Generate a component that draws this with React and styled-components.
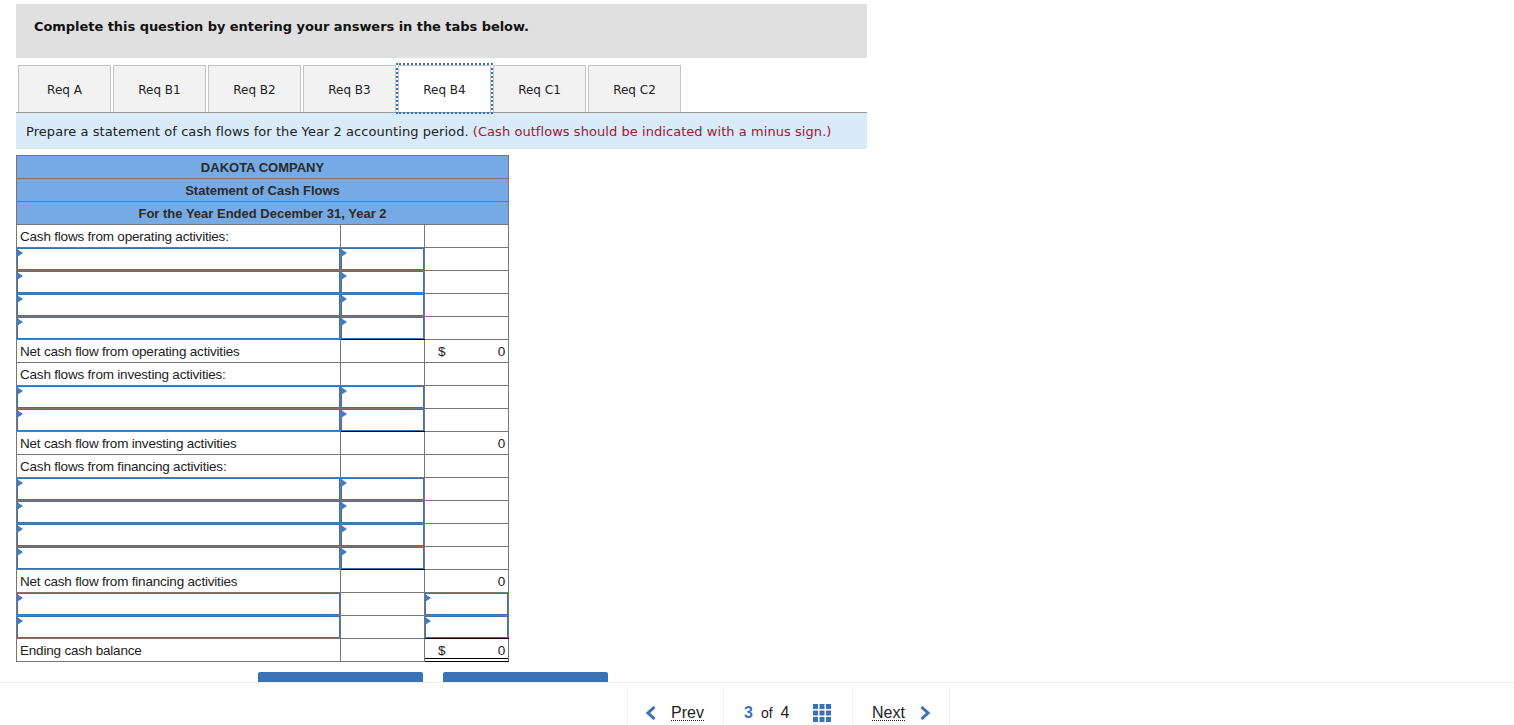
import React from "react";
import styled, { createGlobalStyle } from "styled-components";

const Global = createGlobalStyle`
  html, body { margin: 0; padding: 0; background: #fff; overflow: hidden; height: 100%; }
`;

const Page = styled.div`
  width: 1514px;
  height: 725px;
  padding: 4px 0 0 16px;
  box-sizing: border-box;
  font-family: "DejaVu Sans", Verdana, sans-serif;
  overflow: hidden;
`;

const Column = styled.div`
  width: 851px;
`;

const Banner = styled.div`
  height: 54px;
  background: #e0e0e0;
  padding-left: 18px;
  box-sizing: border-box;
  display: flex;
  align-items: center;
  font-size: 13px;
  letter-spacing: -0.05px;
  font-weight: 700;
  color: #111;
  padding-bottom: 10px;
`;

const TabRow = styled.div`
  display: flex;
  gap: 2px;
  height: 55px;
  padding: 7px 0 0 2px;
  box-sizing: border-box;
  border-bottom: 1px solid #999;
`;

const Tab = styled.div`
  width: 93px;
  height: 47px;
  box-sizing: border-box;
  display: flex;
  align-items: center;
  justify-content: center;
  padding-top: 2px;
  font-size: 12px;
  color: #222;
  background: ${(p) => (p.$active ? "#fff" : "#f2f2f2")};
  border: 1px solid #c4c4c4;
  border-bottom: none;
  ${(p) => p.$active && `outline: 2px dotted #3a73b5; position: relative; z-index: 1;`}
`;

const Instruction = styled.div`
  height: 36px;
  background: #d9ebf9;
  padding-left: 10px;
  display: flex;
  align-items: center;
  font-size: 13px;
  letter-spacing: 0.055px;
  color: #222;
  white-space: pre;
`;

const Note = styled.span`
  color: #a3172f;
`;

const Sheet = styled.table`
  margin-top: 6px;
  border-collapse: collapse;
  table-layout: fixed;
  width: 493px;
  font-family: "Liberation Sans", Arial, sans-serif;
  font-size: 13.5px;
  letter-spacing: -0.2px;
  color: #222;
`;

const NarrowCol = styled.col`
  width: 84px;
`;

const WideCol = styled.col`
  width: 324px;
`;

const Row = styled.tr`
  height: 23px;
`;

const Head = styled.th`
  background: #76aae4;
  border: 1px solid #777;
  padding: 0;
  font-size: 13px;
  letter-spacing: 0;
  font-weight: 700;
  text-align: center;
  color: #2a2a2a;
  height: 22px;
`;

const Cell = styled.td`
  border: 1px solid #777;
  padding: 1px 3px 0;
  height: 21px;
  white-space: nowrap;
  line-height: 21px;
  overflow: hidden;
`;

const AmountCell = styled(Cell)`
  padding: 1px 3px 0 13px;
`;

const EndingCell = styled(AmountCell)`
  border-bottom: 1px solid #000;
  box-shadow: inset 0 -2px 0 #fff, inset 0 -3px 0 #000;
  line-height: 19px;
`;

const Amount = styled.div`
  display: flex;
  justify-content: space-between;
`;

const Zero = styled.span`
  margin-left: auto;
`;

const InputCell = styled.td`
  border: 1px solid #777;
  ${(p) => p.$topBlack && "border-top: 1px solid #000;"}
  ${(p) => p.$bottomBlack && "border-bottom: 1px solid #000;"}
  padding: 0;
  height: 22px;
`;

const InputBox = styled.div`
  position: relative;
  height: 22px;
  box-sizing: border-box;
  border: 1px solid #3a73b5;
  background: #fff;
  &::before {
    content: "";
    position: absolute;
    left: -1px;
    top: 0;
    border-left: 6px solid #3f7cc4;
    border-top: 4px solid transparent;
    border-bottom: 4px solid transparent;
  }
`;

const Buttons = styled.div`
  margin: 10px 0 0 242px;
  display: flex;
  gap: 20px;
`;

const ActionButton = styled.div`
  width: 165px;
  height: 40px;
  background: #3a73b5;
  border-radius: 2px 2px 0 0;
`;

const Footer = styled.div`
  position: fixed;
  left: 0;
  right: 0;
  bottom: 0;
  height: 42px;
  background: #fff;
  border-top: 1px solid #eee;
  font-family: "Liberation Sans", Arial, sans-serif;
  color: #222;
`;

const Nav = styled.div`
  position: absolute;
  left: 627px;
  top: 5px;
  height: 37px;
  display: flex;
  border-right: 1px solid #eee;
`;

const NavCell = styled.div`
  height: 37px;
  width: ${(p) => p.$w}px;
  box-sizing: border-box;
  border-left: 1px solid #eee;
  display: flex;
  align-items: center;
  padding-top: 12px;
`;

const NavLink = styled.span`
  font-size: 16px;
  border-bottom: 1px dotted #222;
  line-height: 15px;
  height: 15px;
  margin-left: ${(p) => p.$ml}px;
`;

const Chevron = styled.svg`
  width: 11px;
  height: 14px;
  margin-left: ${(p) => p.$ml}px;
  flex: none;
`;

const Current = styled.span`
  font-size: 16px;
  font-weight: 700;
  color: #3a73b5;
  margin-left: 20px;
`;

const Of = styled.span`
  font-size: 14px;
  margin-left: 8px;
`;

const Total = styled.span`
  font-size: 16px;
  margin-left: 8px;
`;

const GridIcon = styled.svg`
  width: 18px;
  height: 18px;
  margin-left: 23px;
  flex: none;
`;

const InputRow = ({ bottomBlack }) => (
  <Row>
    <InputCell><InputBox /></InputCell>
    <InputCell $bottomBlack={bottomBlack}><InputBox /></InputCell>
    <Cell />
  </Row>
);

const LabelRow = ({ text }) => (
  <Row>
    <Cell>{text}</Cell>
    <Cell />
    <Cell />
  </Row>
);

const NetRow = ({ text, dollar }) => (
  <Row>
    <Cell>{text}</Cell>
    <Cell />
    <AmountCell>
      <Amount>
        {dollar && <span>$</span>}
        <Zero>0</Zero>
      </Amount>
    </AmountCell>
  </Row>
);

const CashInputRow = ({ topBlack, bottomBlack }) => (
  <Row>
    <InputCell><InputBox /></InputCell>
    <Cell />
    <InputCell $topBlack={topBlack} $bottomBlack={bottomBlack}><InputBox /></InputCell>
  </Row>
);

const tabs = ["Req A", "Req B1", "Req B2", "Req B3", "Req B4", "Req C1", "Req C2"];
const gridSteps = [0, 6.5, 13];

export default function App() {
  return (
    <Page>
      <Global />
      <Column>
        <Banner>Complete this question by entering your answers in the tabs below.</Banner>
        <TabRow>
          {tabs.map((t) => (
            <Tab key={t} $active={t === "Req B4"}>
              {t}
            </Tab>
          ))}
        </TabRow>
        <Instruction>
          Prepare a statement of cash flows for the Year 2 accounting period. <Note>(Cash outflows should be indicated with a minus sign.)</Note>
        </Instruction>
        <Sheet>
          <colgroup>
            <WideCol />
            <NarrowCol />
            <NarrowCol />
          </colgroup>
          <tbody>
            <Row><Head colSpan={3}>DAKOTA COMPANY</Head></Row>
            <Row><Head colSpan={3}>Statement of Cash Flows</Head></Row>
            <Row><Head colSpan={3}>For the Year Ended December 31, Year 2</Head></Row>
            <LabelRow text="Cash flows from operating activities:" />
            <InputRow />
            <InputRow />
            <InputRow />
            <InputRow bottomBlack />
            <NetRow text="Net cash flow from operating activities" dollar />
            <LabelRow text="Cash flows from investing activities:" />
            <InputRow />
            <InputRow bottomBlack />
            <NetRow text="Net cash flow from investing activities" />
            <LabelRow text="Cash flows from financing activities:" />
            <InputRow />
            <InputRow />
            <InputRow />
            <InputRow bottomBlack />
            <NetRow text="Net cash flow from financing activities" />
            <CashInputRow topBlack />
            <CashInputRow bottomBlack />
            <Row>
              <Cell>Ending cash balance</Cell>
              <Cell />
              <EndingCell>
                <Amount>
                  <span>$</span>
                  <Zero>0</Zero>
                </Amount>
              </EndingCell>
            </Row>
          </tbody>
        </Sheet>
        <Buttons>
          <ActionButton />
          <ActionButton />
        </Buttons>
      </Column>
      <Footer>
        <Nav>
          <NavCell $w={96}>
            <Chevron $ml={17} viewBox="0 0 11 14">
              <path d="M9.5 1 L3 7 L9.5 13" fill="none" stroke="#3a73b5" strokeWidth="3" />
            </Chevron>
            <NavLink $ml={15}>Prev</NavLink>
          </NavCell>
          <NavCell $w={129}>
            <Current>3</Current>
            <Of>of</Of>
            <Total>4</Total>
            <GridIcon viewBox="0 0 18 18">
              {gridSteps.map((y) =>
                gridSteps.map((x) => <rect key={`${x}-${y}`} x={x} y={y} width="5" height="5" fill="#3a73b5" />)
              )}
            </GridIcon>
          </NavCell>
          <NavCell $w={97}>
            <NavLink $ml={19}>Next</NavLink>
            <Chevron $ml={15} viewBox="0 0 11 14">
              <path d="M1.5 1 L8 7 L1.5 13" fill="none" stroke="#3a73b5" strokeWidth="3" />
            </Chevron>
          </NavCell>
        </Nav>
      </Footer>
    </Page>
  );
}
